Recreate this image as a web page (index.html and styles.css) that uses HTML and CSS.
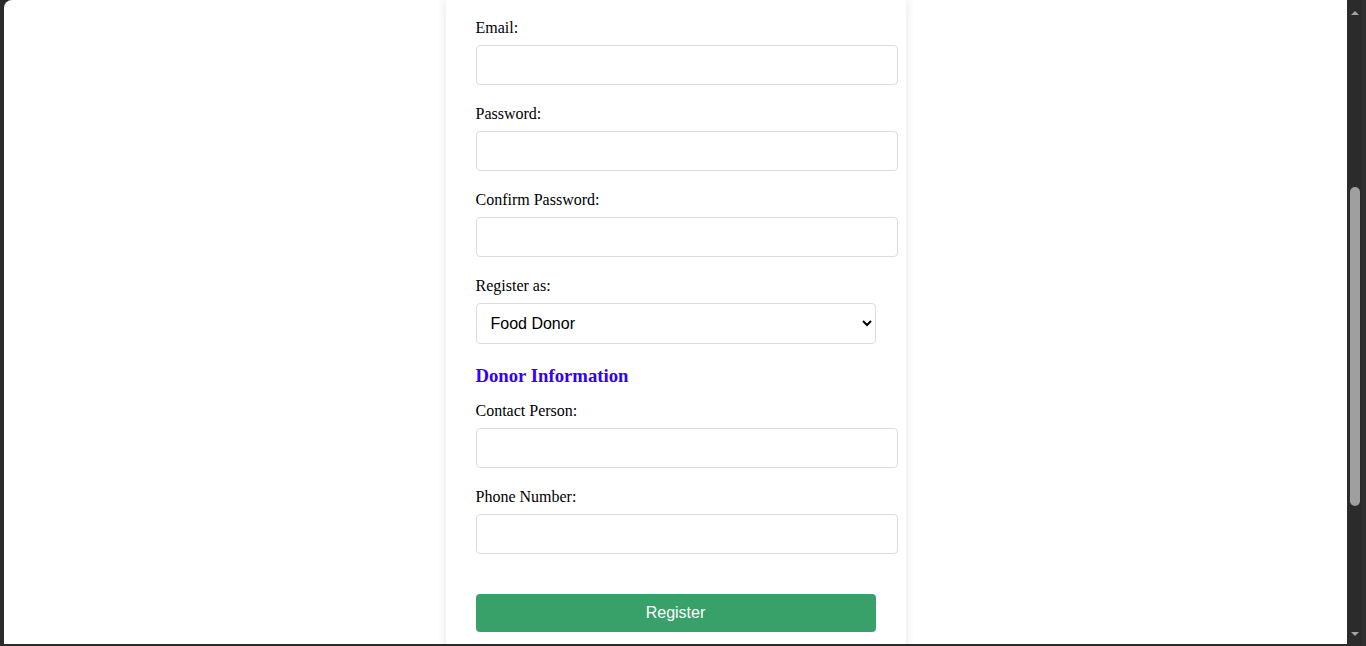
FILE: index.html
```html
<!DOCTYPE html>
<html lang="en">
<head>
<meta charset="utf-8">
<title>Register</title>
<link rel="stylesheet" href="styles.css">
</head>
<body>
<div class="window">
  <div class="edge"></div>
  <main class="viewport">
    <form class="card">
      <div class="group">
        <label for="email">Email:</label>
        <input id="email" type="email">
      </div>
      <div class="group">
        <label for="pw">Password:</label>
        <input id="pw" type="password">
      </div>
      <div class="group">
        <label for="cpw">Confirm Password:</label>
        <input id="cpw" type="password">
      </div>
      <div class="group">
        <label for="role">Register as:</label>
        <select id="role">
          <option>Food Donor</option>
          <option>Recipient</option>
        </select>
      </div>
      <h3 class="section-title">Donor Information</h3>
      <div class="group">
        <label for="contact">Contact Person:</label>
        <input id="contact" type="text">
      </div>
      <div class="group">
        <label for="phone">Phone Number:</label>
        <input id="phone" type="text">
      </div>
      <button type="button" class="submit">Register</button>
    </form>
  </main>
  <div class="scrollbar">
    <div class="arrow-up"></div>
    <div class="thumb"></div>
    <div class="arrow-down"></div>
  </div>
  <div class="edge-right"></div>
</div>
</body>
</html>
```

FILE: styles.css
```css
html, body {
  margin: 0;
  padding: 0;
  height: 100%;
  overflow: hidden;
  background: #2b2b2b;
}

.window {
  display: flex;
  height: 646px;
  background: #2b2b2b;
}

.edge {
  width: 4px;
  flex: none;
}

.edge-right {
  width: 4px;
  flex: none;
  background: #303030;
}

.viewport {
  flex: 1;
  height: 644px;
  background: #ffffff;
  border-top-left-radius: 8px;
  overflow: hidden;
  display: flex;
  justify-content: center;
  font-family: "Liberation Serif", "Times New Roman", serif;
  font-size: 16px;
  color: #000;
}

.card {
  width: 460px;
  box-sizing: border-box;
  padding: 19px 30px 40px;
  background: #fff;
  box-shadow: 0 0 10px rgba(0, 0, 0, 0.1);
  align-self: flex-start;
  min-height: 700px;
}

.group label {
  display: block;
  margin-bottom: 8px;
}

.group input {
  display: block;
  width: 100%;
  padding: 10px;
  margin: 0 0 20px;
  border: 1px solid #dddddd;
  border-radius: 4px;
  font-family: "Liberation Sans", Arial, sans-serif;
  font-size: 16px;
  line-height: 18px;
  height: 18px;
  background: #fff;
}

.group select {
  display: block;
  width: 100%;
  height: 41px;
  padding: 0 10px;
  margin: 0 0 20px;
  border: 1px solid #dddddd;
  border-radius: 4px;
  font-family: "Liberation Sans", Arial, sans-serif;
  font-size: 16px;
  color: #000;
  background: #fff;
}

.section-title {
  margin: 21px 0 15px;
  font-size: 18.72px;
  font-weight: bold;
  color: #3300ff;
}

.submit {
  display: block;
  width: 100%;
  height: 38px;
  margin-top: 40px;
  padding: 0 10px;
  border: none;
  border-radius: 4px;
  background: #38a169;
  color: #ffffff;
  font-family: "Liberation Sans", Arial, sans-serif;
  font-size: 16px;
}

.scrollbar {
  width: 15px;
  flex: none;
  display: flex;
  flex-direction: column;
  align-items: center;
  background: #2b2b2b;
}

.arrow-up {
  margin-top: 11px;
  width: 0;
  height: 0;
  border-left: 4px solid transparent;
  border-right: 4px solid transparent;
  border-bottom: 4px solid #a3a3a3;
}

.thumb {
  margin-top: 172px;
  width: 10px;
  height: 319px;
  border-radius: 5px;
  background: #9f9f9f;
}

.arrow-down {
  margin-top: auto;
  margin-bottom: 10px;
  width: 0;
  height: 0;
  border-left: 4px solid transparent;
  border-right: 4px solid transparent;
  border-top: 4px solid #a3a3a3;
}
```
